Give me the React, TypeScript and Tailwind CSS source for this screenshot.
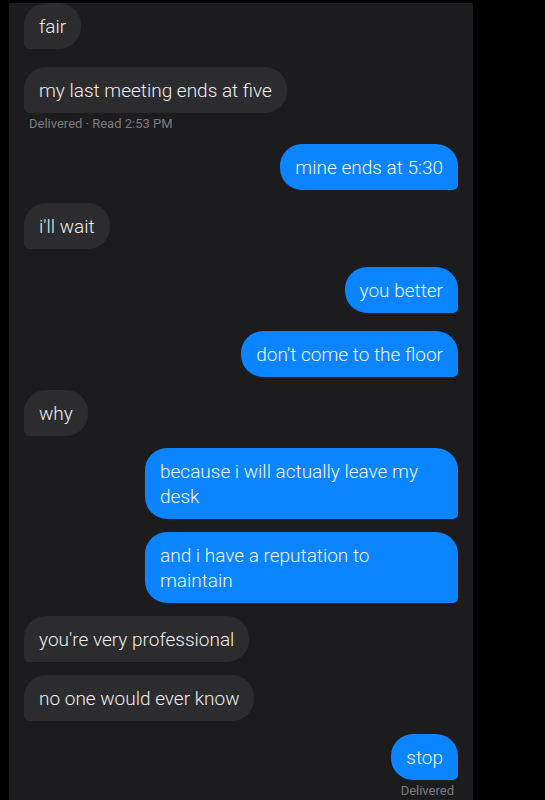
type Msg = {
  text: string;
  me?: boolean;
  mt: string;
  note?: string;
};

const messages: Msg[] = [
  { text: "fair", mt: "mt-[3px]" },
  { text: "my last meeting ends at five", mt: "mt-[18px]", note: "Delivered · Read 2:53 PM" },
  { text: "mine ends at 5:30", me: true, mt: "mt-[12px]" },
  { text: "i'll wait", mt: "mt-[13px]" },
  { text: "you better", me: true, mt: "mt-[18px]" },
  { text: "don't come to the floor", me: true, mt: "mt-[18px]" },
  { text: "why", mt: "mt-[13px]" },
  { text: "because i will actually leave my desk", me: true, mt: "mt-[12px]" },
  { text: "and i have a reputation to maintain", me: true, mt: "mt-[13px]" },
  { text: "you're very professional", mt: "mt-[13px]" },
  { text: "no one would ever know", mt: "mt-[13px]" },
  { text: "stop", me: true, mt: "mt-[13px]", note: "Delivered" },
];

function Bubble({ msg }: { msg: Msg }) {
  return (
    <div className={`flex flex-col ${msg.me ? "items-end" : "items-start"} ${msg.mt}`}>
      <div
        className={
          msg.me
            ? "max-w-[313px] rounded-[22px] rounded-br-[5px] bg-[#0a84ff] px-[15px] py-[10.5px] text-[19px] font-light leading-[25px] text-[#f2f6ff]"
            : "max-w-[313px] rounded-[22px] rounded-bl-[5px] bg-[#2c2c2e] px-[15px] py-[10.5px] text-[19px] font-light leading-[25px] text-[#eeeeee]"
        }
      >
        {msg.text}
      </div>
      {msg.note && (
        <div
          className={`mt-[3px] text-[13px] leading-[16px] text-[#7c7c80] ${
            msg.me ? "mr-[4px]" : "ml-[5px]"
          }`}
        >
          {msg.note}
        </div>
      )}
    </div>
  );
}

export default function App() {
  return (
    <div className="h-[800px] w-[545px] overflow-hidden bg-black font-['Roboto','Liberation_Sans',sans-serif]">
      <div className="ml-[9px] h-full w-[464px] bg-[#1c1c1e] px-[15px]">
        {messages.map((m, i) => (
          <Bubble key={i} msg={m} />
        ))}
      </div>
    </div>
  );
}
